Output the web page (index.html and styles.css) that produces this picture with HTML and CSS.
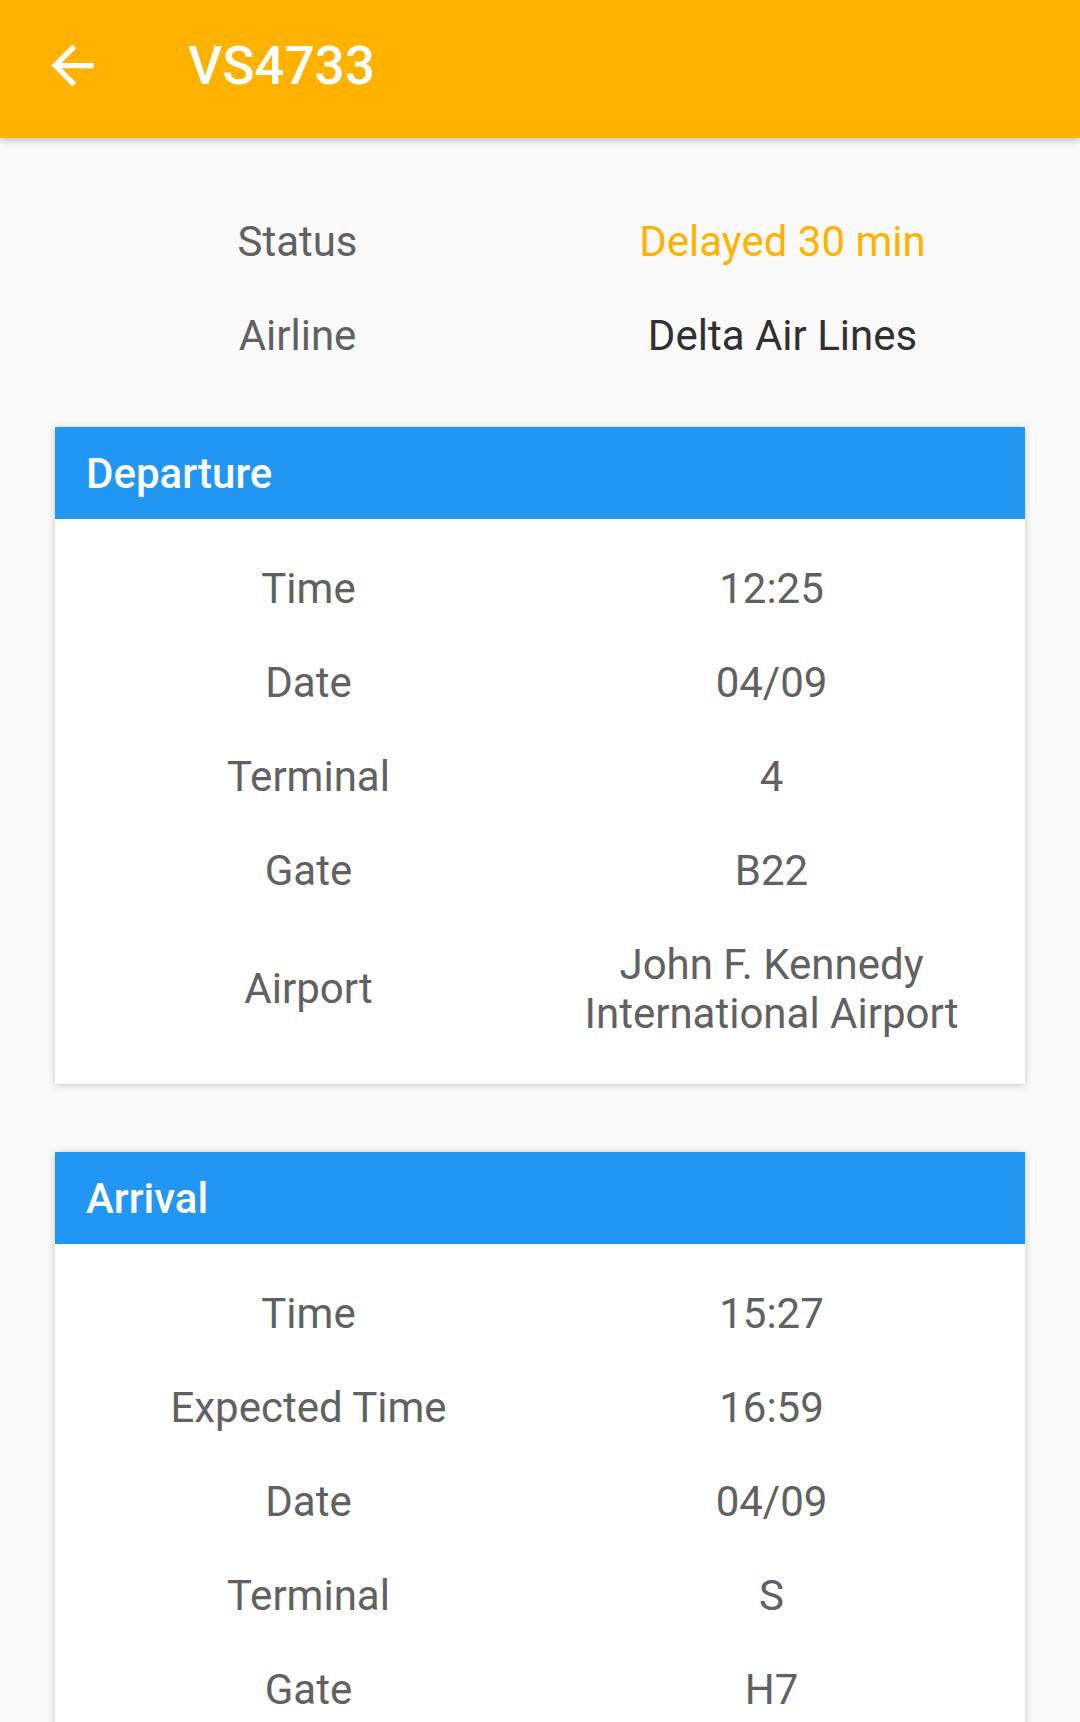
FILE: index.html
```html
<!DOCTYPE html>
<html lang="en">
<head>
    <meta charset="UTF-8">
    <meta name="viewport" content="width=device-width, initial-scale=1.0">
    <title>VS4733</title>
    <link rel="stylesheet" href="styles.css">
</head>
<body>
    <header class="app-bar">
        <button class="back-button" aria-label="Back">
            <svg viewBox="0 0 24 24" width="63" height="63">
                <path fill="#fff" d="M20 11H7.83l5.59-5.59L12 4l-8 8 8 8 1.41-1.41L7.83 13H20v-2z"/>
            </svg>
        </button>
        <h1 class="app-title">VS4733</h1>
    </header>

    <main class="content">
        <div class="summary">
            <div class="row">
                <div class="label">Status</div>
                <div class="value status-delayed">Delayed 30 min</div>
            </div>
            <div class="row">
                <div class="label">Airline</div>
                <div class="value airline">Delta Air Lines</div>
            </div>
        </div>

        <section class="card">
            <div class="card-header">Departure</div>
            <div class="card-body">
                <div class="row">
                    <div class="label">Time</div>
                    <div class="value">12:25</div>
                </div>
                <div class="row">
                    <div class="label">Date</div>
                    <div class="value">04/09</div>
                </div>
                <div class="row">
                    <div class="label">Terminal</div>
                    <div class="value">4</div>
                </div>
                <div class="row">
                    <div class="label">Gate</div>
                    <div class="value">B22</div>
                </div>
                <div class="row">
                    <div class="label">Airport</div>
                    <div class="value">John F. Kennedy<br>International Airport</div>
                </div>
            </div>
        </section>

        <section class="card">
            <div class="card-header">Arrival</div>
            <div class="card-body">
                <div class="row">
                    <div class="label">Time</div>
                    <div class="value">15:27</div>
                </div>
                <div class="row">
                    <div class="label">Expected Time</div>
                    <div class="value">16:59</div>
                </div>
                <div class="row">
                    <div class="label">Date</div>
                    <div class="value">04/09</div>
                </div>
                <div class="row">
                    <div class="label">Terminal</div>
                    <div class="value">S</div>
                </div>
                <div class="row">
                    <div class="label">Gate</div>
                    <div class="value">H7</div>
                </div>
            </div>
        </section>
    </main>
</body>
</html>
```

FILE: styles.css
```css
html, body {
    margin: 0;
    padding: 0;
}
body {
    font-family: Roboto, "Noto Sans", Arial, sans-serif;
    background-color: #fafafa;
    width: 1080px;
    height: 1722px;
    overflow: hidden;
}
.app-bar {
    display: flex;
    align-items: center;
    box-sizing: border-box;
    height: 138px;
    padding-bottom: 7px;
    background-color: #ffb300;
    box-shadow: 0 2px 8px rgba(0, 0, 0, 0.28);
    position: relative;
    z-index: 1;
}
.back-button {
    display: flex;
    align-items: center;
    justify-content: center;
    width: 63px;
    height: 63px;
    margin-left: 41px;
    padding: 0;
    border: none;
    background: none;
}
.app-title {
    margin: 0 0 0 84px;
    color: white;
    font-size: 53px;
    font-weight: 500;
}
.content {
    padding: 56px 55px 0;
}
.row {
    display: flex;
    align-items: center;
    padding: 22.5px 0;
    line-height: 49px;
    font-size: 42px;
    color: #616161;
}
.label, .value {
    flex: 1;
    text-align: center;
}
.status-delayed { color: #ffb300; }
.airline { color: #303030; }
.card {
    background-color: white;
    box-shadow: 0 1px 8px rgba(0, 0, 0, 0.2);
    margin-top: 45px;
}
.card + .card {
    margin-top: 68px;
}
.card-header {
    display: flex;
    align-items: center;
    height: 92px;
    padding-left: 31px;
    background-color: #2196f3;
    color: white;
    font-size: 42px;
    font-weight: 500;
}
.card-body {
    padding: 22px 22px 24px;
}
```
